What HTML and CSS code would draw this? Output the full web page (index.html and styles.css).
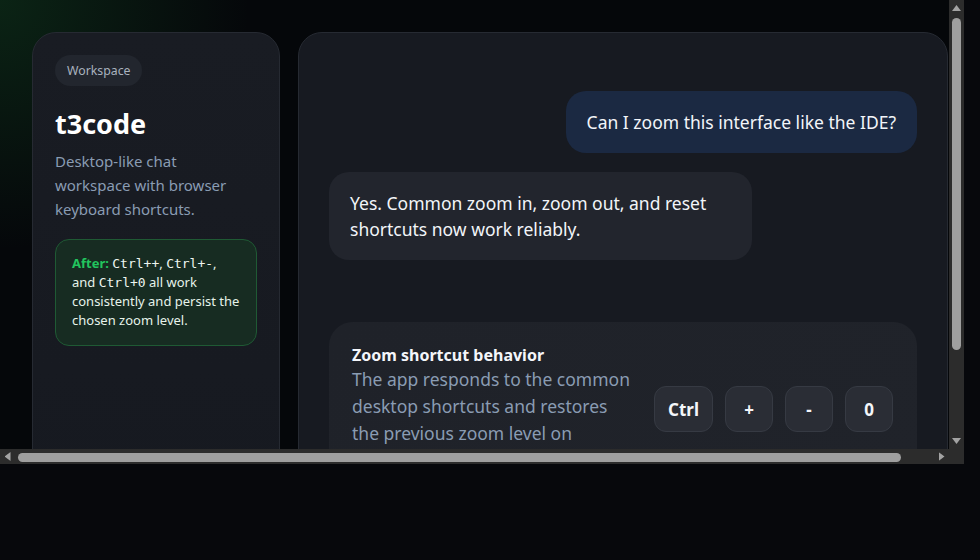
FILE: index.html
```html
<!DOCTYPE html>
<html lang="en">
<head>
<meta charset="utf-8">
<title>t3code</title>
<link rel="stylesheet" href="styles.css">
</head>
<body>
<div class="frame">
  <div class="viewport">
    <div class="page">
      <aside class="side">
        <span class="pill">Workspace</span>
        <h1 class="title">t3code</h1>
        <p class="desc">Desktop-like chat workspace with browser keyboard shortcuts.</p>
        <div class="note"><strong class="note-label">After:</strong> <code>Ctrl++</code>, <code>Ctrl+-</code>, and <code>Ctrl+0</code> all work consistently and persist the chosen zoom level.</div>
      </aside>
      <main class="chat">
        <div class="msg msg-user">Can I zoom this interface like the IDE?</div>
        <div class="msg msg-bot">Yes. Common zoom in, zoom out, and reset shortcuts now work reliably.</div>
        <section class="card">
          <div class="card-text">
            <h2 class="card-title">Zoom shortcut behavior</h2>
            <p class="card-desc">The app responds to the common desktop shortcuts and restores the previous zoom level on startup.</p>
          </div>
          <div class="keys">
            <kbd class="key">Ctrl</kbd>
            <kbd class="key">+</kbd>
            <kbd class="key">-</kbd>
            <kbd class="key">0</kbd>
          </div>
        </section>
      </main>
    </div>
  </div>
  <div class="vbar">
    <span class="arrow arrow-up"></span>
    <span class="vthumb"></span>
    <span class="bar-fill"></span>
    <span class="arrow arrow-down"></span>
  </div>
  <div class="hbar">
    <span class="arrow arrow-left"></span>
    <span class="hthumb"></span>
    <span class="bar-fill"></span>
    <span class="arrow arrow-right"></span>
  </div>
  <div class="corner"></div>
</div>
</body>
</html>
```

FILE: styles.css
```css
html, body {
  margin: 0;
  padding: 0;
  background: #07080c;
  height: 100%;
}

body {
  font-family: "Noto Sans", "Open Sans", sans-serif;
  color: #e8ecf2;
}

/* scrolling frame with classic dark scrollbars */
.frame {
  width: 964px;
  height: 464px;
  display: grid;
  grid-template-columns: 949px 15px;
  grid-template-rows: 449px 15px;
}

.viewport {
  overflow: hidden;
  background:
    radial-gradient(circle at 0 0, rgba(34, 150, 64, 0.2), rgba(34, 150, 64, 0) 250px),
    #05070a;
}

.vbar,
.hbar,
.corner {
  background: #2c2c2c;
}

.vbar {
  display: flex;
  flex-direction: column;
  align-items: center;
}

.hbar {
  display: flex;
  align-items: center;
}

.bar-fill {
  flex: 1;
}

.arrow {
  flex: none;
  width: 15px;
  height: 15px;
  display: block;
}

.arrow::after {
  content: "";
  display: block;
  background: #a3a3a3;
  margin: auto;
}

.arrow-up::after,
.arrow-down::after {
  width: 9px;
  height: 6px;
  margin-top: 5px;
}

.arrow-up::after {
  clip-path: polygon(50% 0, 100% 100%, 0 100%);
}

.arrow-down::after {
  clip-path: polygon(0 0, 100% 0, 50% 100%);
  margin-top: 4px;
}

.arrow-left,
.arrow-right {
  display: flex;
  align-items: center;
}

.arrow-left::after,
.arrow-right::after {
  width: 6px;
  height: 9px;
}

.arrow-left::after {
  clip-path: polygon(100% 0, 100% 100%, 0 50%);
}

.arrow-right::after {
  clip-path: polygon(0 0, 100% 50%, 0 100%);
}

.vthumb {
  flex: none;
  width: 9px;
  height: 332px;
  margin-top: 3px;
  border-radius: 5px;
  background: #9f9f9f;
}

.hthumb {
  flex: none;
  width: 883px;
  height: 9px;
  margin-left: 3px;
  margin-top: 1px;
  border-radius: 5px;
  background: #9f9f9f;
}

/* page content */
.page {
  width: 980px;
  height: 568px;
  box-sizing: border-box;
  padding: 32px;
  display: flex;
  gap: 18px;
}

.side {
  width: 248px;
  flex: none;
  box-sizing: border-box;
  padding: 22px;
  border: 1px solid #262a32;
  border-radius: 24px;
  background: linear-gradient(180deg, #191c23, #161920);
  display: flex;
  flex-direction: column;
  align-items: flex-start;
}

.pill {
  display: inline-flex;
  align-items: center;
  height: 31px;
  padding: 0 12px;
  border-radius: 16px;
  background: #22262e;
  color: #a9b2be;
  font-size: 12.3px;
}

.title {
  margin: 21px 0 0;
  font-size: 27px;
  line-height: 34px;
  font-weight: 700;
  color: #ffffff;
}

.desc {
  margin: 8px 0 0;
  max-width: 190px;
  font-size: 15px;
  line-height: 24px;
  color: #8a9cb3;
}

.note {
  margin-top: 18px;
  box-sizing: border-box;
  width: 202px;
  padding: 14px 14px 15px 16px;
  border: 1px solid #1f5a34;
  border-radius: 14px;
  background: #172c22;
  color: #e6f3ea;
  font-size: 13px;
  line-height: 19px;
}

.note-label {
  color: #22c55e;
  font-weight: 700;
}

.note code {
  font-family: "DejaVu Sans Mono", "Liberation Mono", monospace;
  font-size: 13px;
  line-height: 1;
  color: #eef6f0;
}

.chat {
  flex: 1;
  box-sizing: border-box;
  padding: 58px 30px 0 30px;
  border: 1px solid #262a32;
  border-radius: 24px;
  background: #171a21;
  display: flex;
  flex-direction: column;
  gap: 19px;
  overflow: hidden;
}

.msg {
  font-size: 17.5px;
  line-height: 26px;
  padding: 18px 21px;
  border-radius: 20px;
  color: #f2f5f9;
}

.msg-user {
  align-self: flex-end;
  background: #1b2942;
}

.msg-bot {
  align-self: flex-start;
  width: 72%;
  box-sizing: border-box;
  background: #22252d;
}

.card {
  margin-top: 43px;
  display: flex;
  align-items: center;
  justify-content: space-between;
  padding: 22px 24px 22px 23px;
  border-radius: 24px;
  background: linear-gradient(135deg, #1f2229, #20232a);
}

.card-text {
  flex: none;
  width: 282px;
}

.card-title {
  margin: 0;
  font-size: 16px;
  line-height: 22px;
  font-weight: 700;
  color: #f4f6fa;
}

.card-desc {
  margin: 0;
  font-size: 17.5px;
  line-height: 27px;
  color: #8a9cb3;
}

.keys {
  display: flex;
  gap: 12px;
  flex: none;
}

.key {
  display: inline-flex;
  align-items: center;
  justify-content: center;
  box-sizing: border-box;
  height: 46px;
  min-width: 48px;
  padding: 0 13px;
  border: 1px solid #363a43;
  border-radius: 12px;
  background: #2a2d35;
  color: #f4f6fa;
  font-family: "Noto Sans", "Open Sans", sans-serif;
  font-size: 17px;
  font-weight: 700;
}
```
